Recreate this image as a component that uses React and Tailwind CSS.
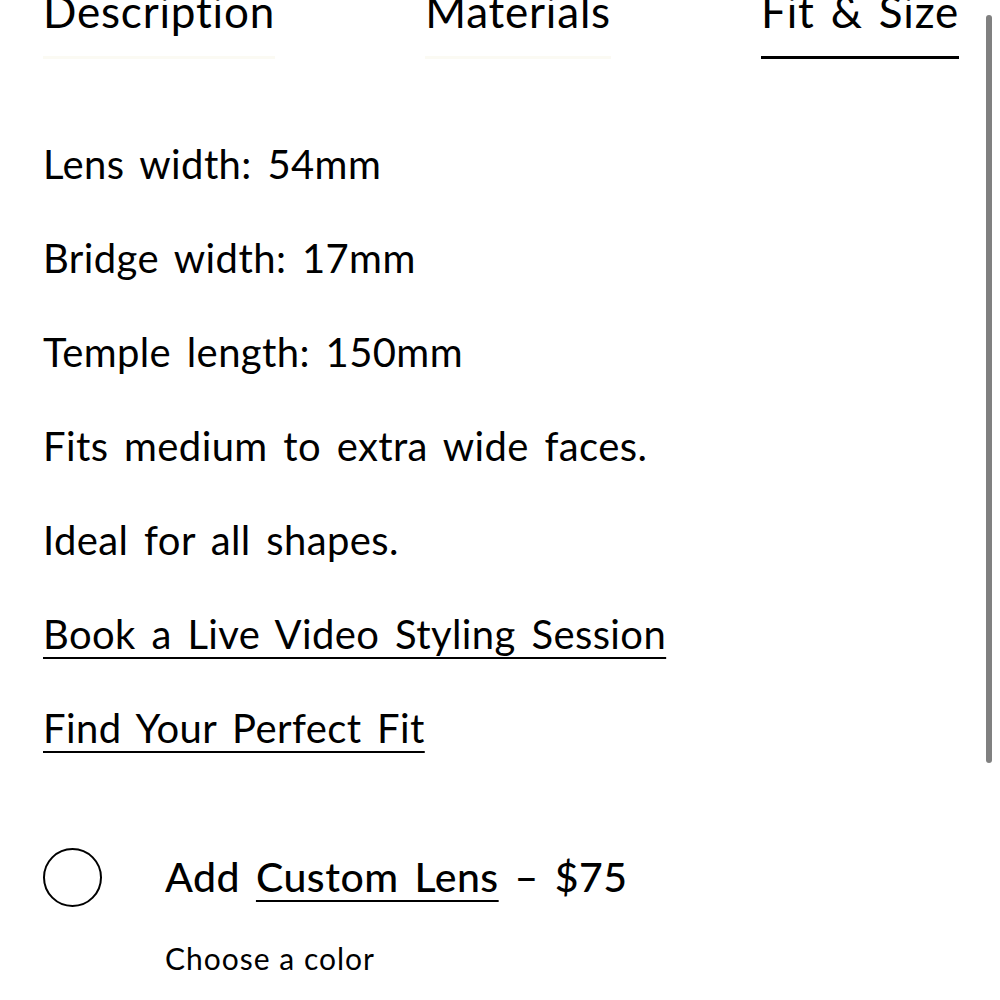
export default function App() {
  const rows = [
    "Lens width: 54mm",
    "Bridge width: 17mm",
    "Temple length: 150mm",
    "Fits medium to extra wide faces.",
    "Ideal for all shapes.",
  ];

  return (
    <div
      className="relative h-[1000px] w-[1000px] overflow-hidden bg-white text-black"
      style={{ fontFamily: "Lato, 'Noto Sans', sans-serif" }}
    >
      {/* scrollbar */}
      <div className="absolute right-[8px] top-[15px] h-[748px] w-[6px] rounded-full bg-[#808080]" />

      {/* tabs */}
      <div className="-mt-[19px] flex items-start justify-between pl-[43px] pr-[41px] tracking-[0.8px] [word-spacing:4px]">
        <div className="flex flex-col">
          <span className="text-[44px] leading-[60px]">Description</span>
          <div className="mt-[15px] h-[3px] bg-[#fbfaf3]" />
        </div>
        <div className="flex flex-col px-[8px]">
          <span className="text-[44px] leading-[60px]">Materials</span>
          <div className="mt-[15px] h-[3px] bg-[#fbfaf3]" />
        </div>
        <div className="flex flex-col">
          <span className="text-[44px] leading-[60px]">Fit &amp; Size</span>
          <div className="mt-[15px] h-[3px] bg-black" />
        </div>
      </div>

      {/* fit details */}
      <div className="mt-[75px] flex flex-col gap-[34px] pl-[43px] text-[40px] leading-[60px] tracking-[0.4px] [word-spacing:5px]">
        {rows.map((r) => (
          <p key={r}>{r}</p>
        ))}
        <a href="#" className="underline decoration-2 underline-offset-[8px]">
          Book a Live Video Styling Session
        </a>
        <a href="#" className="underline decoration-2 underline-offset-[8px]">
          Find Your Perfect Fit
        </a>
      </div>

      {/* custom lens */}
      <div className="mt-[89px] flex items-center pl-[43px]">
        <div className="h-[59px] w-[59px] rounded-full border-2 border-black" />
        <span className="ml-[63px] text-[41px] font-medium leading-[60px] tracking-[0.5px] [word-spacing:5px]">
          Add{" "}
          <a href="#" className="underline decoration-2 underline-offset-[8px]">
            Custom Lens
          </a>{" "}
          – $75
        </span>
      </div>
      <p className="mt-[31px] pl-[165px] text-[30px] leading-[40px] tracking-[1px]">Choose a color</p>
    </div>
  );
}
